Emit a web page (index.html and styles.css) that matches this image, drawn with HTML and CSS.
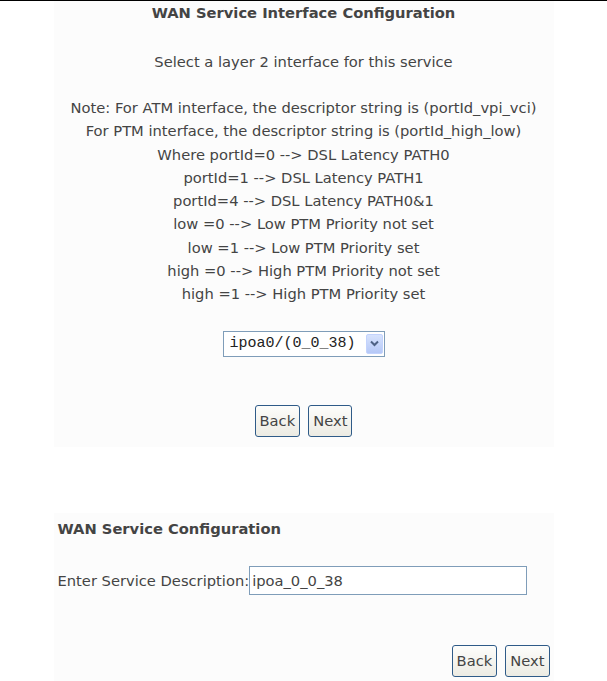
FILE: index.html
```html
<!DOCTYPE html>
<html lang="en">
<head>
    <meta charset="UTF-8">
    <title>WAN Service</title>
    <link rel="stylesheet" href="styles.css">
</head>
<body>
    <form class="panel panel-top">
        <div class="title">WAN Service Interface Configuration</div>
        <p class="lead">Select a layer 2 interface for this service</p>
        <p class="note">
            Note: For ATM interface, the descriptor string is (portId_vpi_vci)<br>
            For PTM interface, the descriptor string is (portId_high_low)<br>
            Where portId=0 --&gt; DSL Latency PATH0<br>
            portId=1 --&gt; DSL Latency PATH1<br>
            portId=4 --&gt; DSL Latency PATH0&amp;1<br>
            low =0 --&gt; Low PTM Priority not set<br>
            low =1 --&gt; Low PTM Priority set<br>
            high =0 --&gt; High PTM Priority not set<br>
            high =1 --&gt; High PTM Priority set
        </p>
        <div class="select-row">
            <span class="select-wrap">
                <select class="select">
                    <option>ipoa0/(0_0_38)</option>
                </select>
                <span class="select-arrow">
                    <svg width="9" height="7" viewBox="0 0 9 7"><path d="M1 1.5 L4.5 5 L8 1.5" fill="none" stroke="#4d6185" stroke-width="2"/></svg>
                </span>
            </span>
        </div>
        <div class="buttons buttons-center">
            <button type="button" class="btn">Back</button>
            <button type="button" class="btn">Next</button>
        </div>
    </form>

    <form class="panel panel-bottom">
        <div class="title title-left">WAN Service Configuration</div>
        <div class="field">
            <label class="field-label">Enter Service Description:</label>
            <input class="text-input" type="text" value="ipoa_0_0_38">
        </div>
        <div class="buttons buttons-right">
            <button type="button" class="btn">Back</button>
            <button type="button" class="btn">Next</button>
        </div>
    </form>
</body>
</html>
```

FILE: styles.css
```css
* {
    margin: 0;
    padding: 0;
    box-sizing: border-box;
}

body {
    font-family: 'DejaVu Sans', sans-serif;
    font-size: 14.7px;
    line-height: 23px;
    color: #444;
    background: #fff;
    border-top: 1px solid #000;
}

.panel {
    width: 500px;
    margin: 0 auto;
    background: #fcfcfc;
}

.panel-top {
    text-align: center;
    padding-bottom: 10px;
}

.title {
    font-weight: bold;
    color: #444;
}

.lead {
    margin-top: 26px;
}

.note {
    margin-top: 23px;
    line-height: 23.25px;
}

.select-row {
    margin-top: 25px;
}

.select-wrap {
    position: relative;
    display: inline-block;
}

.select {
    appearance: none;
    -webkit-appearance: none;
    width: 162px;
    height: 26px;
    border: 1px solid #7f9db9;
    background: #fff;
    font-family: 'Liberation Mono', monospace;
    font-size: 15px;
    color: #222;
    padding: 0 20px 0 6px;
    display: block;
}

.select-arrow {
    position: absolute;
    right: 2px;
    top: 3px;
    width: 17px;
    height: 20px;
    border-radius: 2px;
    background: linear-gradient(#d7e3fd, #b5c8f7);
    border: 1px solid #c3d3fd;
    display: flex;
    align-items: center;
    justify-content: center;
}

.buttons {
    display: flex;
    gap: 8px;
}

.buttons-center {
    justify-content: center;
    margin-top: 48px;
}

.buttons-right {
    justify-content: flex-end;
    margin-top: 50px;
}

.btn {
    height: 32px;
    padding: 0 4px;
    border: 1px solid #2f5b88;
    border-radius: 3px;
    background: linear-gradient(#fdfdfb, #ecebe3);
    font-family: inherit;
    font-size: 14.7px;
    color: #444;
}

.panel-bottom {
    margin-top: 66px;
    padding: 4px 4px 6px 4px;
}

.title-left {
    text-align: left;
}

.field {
    display: flex;
    align-items: center;
    margin-top: 26px;
}

.text-input {
    width: 278px;
    height: 29px;
    border: 1px solid #7f9db9;
    background: #fff;
    font-family: inherit;
    font-size: 14.7px;
    color: #444;
    padding: 0 2px;
}
```
